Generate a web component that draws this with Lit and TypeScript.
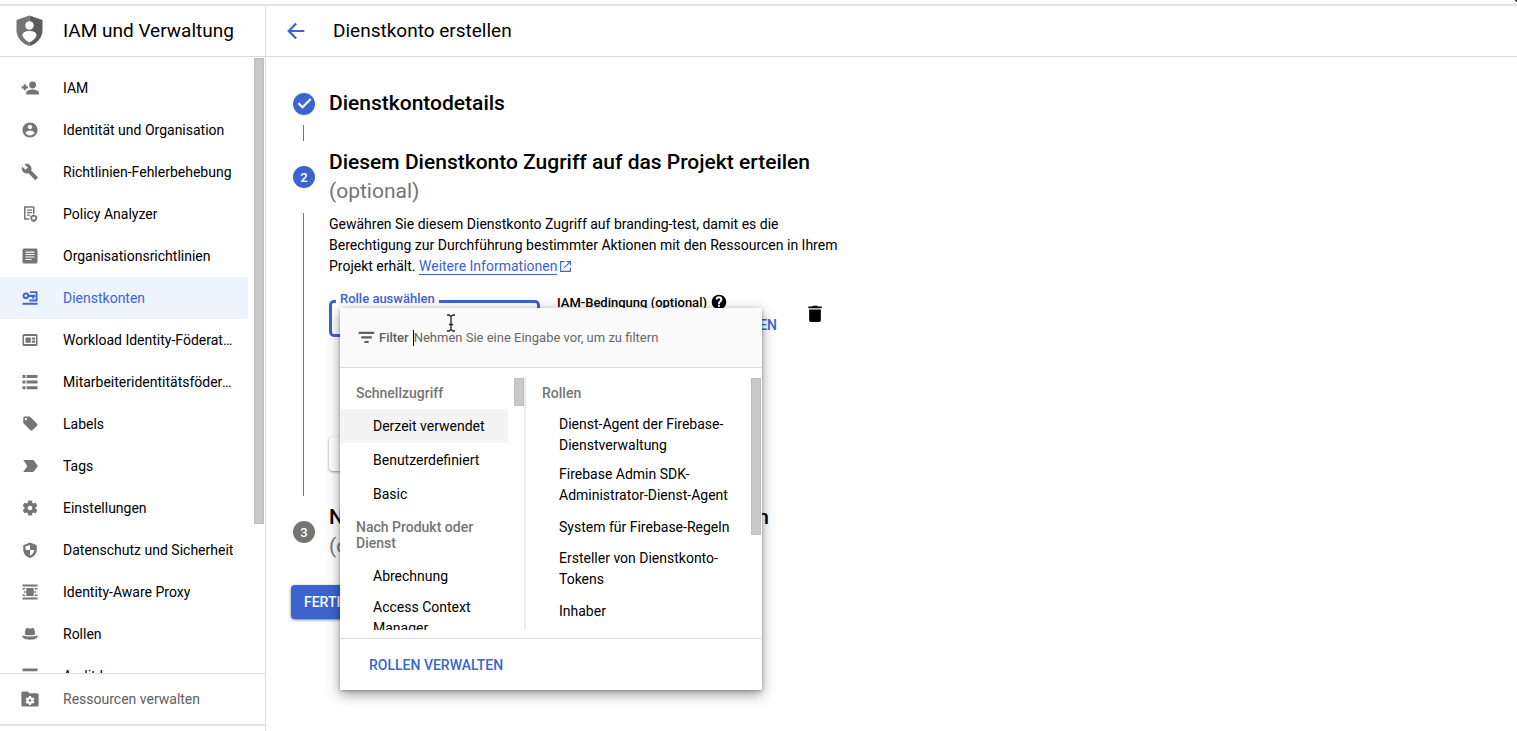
import { LitElement, html, css, svg } from "lit";
import { customElement, property } from "lit/decorators.js";

const ICONS: Record<string, unknown> = {
  addPerson: svg`<circle cx="15.500" cy="8" r="4.600"/><path d="M15.500 14c-2.900 0-8.500 1.300-8.500 4v2.500h17V18c0-2.700-5.600-4-8.500-4zM6.500 10V7h-3v2.500H.8v3h2.700V15h3v-2.500h2.700v-3H6.500z"/>`,
  account: svg`<path d="M12 2C6.480 2 2 6.480 2 12s4.480 10 10 10 10-4.480 10-10S17.520 2 12 2zm0 3c1.660 0 3 1.340 3 3s-1.340 3-3 3-3-1.340-3-3 1.340-3 3-3zm0 14.200c-2.500 0-4.710-1.280-6-3.220.03-1.990 4-3.080 6-3.080 1.990 0 5.970 1.090 6 3.080-1.290 1.940-3.500 3.220-6 3.220z"/>`,
  wrench: svg`<path d="M22.300 18.600l-8.700-8.700c.9-2.300.4-5-1.500-6.900-2-2-5-2.400-7.400-1.300L9 6 6 9 1.600 4.700C.4 7.100.9 10.100 2.900 12.100c1.900 1.900 4.600 2.400 6.900 1.500l8.700 8.700c.4.4 1 .4 1.400 0l2.300-2.300c.5-.4.5-1 .1-1.400z"/>`,
  policy: svg`<path d="M5 1.500h12a1 1 0 0 1 1 1V12h-2V3.500H6v14h5v2H5a1 1 0 0 1-1-1v-16a1 1 0 0 1 1-1z"/><path d="M8 6h7v1.600H8zm0 3.400h7V11H8zm0 3.400h4v1.600H8z"/><path fill-rule="evenodd" d="M17 12.500l4.500 2V17.500c0 2.400-1.800 4.500-4.500 5.200-2.700-.7-4.500-2.800-4.500-5.200v-3zm0 2.700a2.200 2.200 0 1 0 0 4.400 2.200 2.200 0 0 0 0-4.400z"/>`,
  article: svg`<path fill-rule="evenodd" d="M4 2h16a2 2 0 0 1 2 2v16a2 2 0 0 1-2 2H4a2 2 0 0 1-2-2V4a2 2 0 0 1 2-2zm2 4v1.500h12V6zm0 3.300v1.500h12V9.300zm0 3.300v1.500h12v-1.500zm0 3.300v1.500h8v-1.500z"/>`,
  serviceKey: svg`<path fill-rule="evenodd" d="M6.500 4.500a4.500 4.500 0 0 1 4.300 3H19v3.200h-1.500V13H15v-2.300h-4.200a4.500 4.500 0 1 1-4.300-6.200zm0 2.700a1.800 1.800 0 1 0 0 3.600 1.800 1.800 0 0 0 0-3.600z"/><path d="M12 3h10v13.500H11V14h8.500V5.300H12zM2 18.300h20V21H2z"/>`,
  card: svg`<path fill-rule="evenodd" d="M4 4h16a2 2 0 0 1 2 2v12a2 2 0 0 1-2 2H4a2 2 0 0 1-2-2V6a2 2 0 0 1 2-2zm0 2.600v10.800h16V6.600z"/><path d="M6 8.500h7v7H6zm8.500 0h4.500v2.700h-4.500zm0 4.300h4.500v2.700h-4.500z"/>`,
  list: svg`<path d="M2 2.500h4v4H2zm5.500 0H22v4H7.500zM2 10h4v4H2zm5.500 0H22v4H7.500zM2 17.500h4v4H2zm5.500 0H22v4H7.500z"/>`,
  label: svg`<path d="M21.410 11.580l-9-9C12.050 2.220 11.550 2 11 2H5c-1.100 0-2 .9-2 2v6c0 .55.22 1.050.59 1.420l9 9c.36.36.86.58 1.410.58.550 0 1.050-.22 1.410-.59l6-6c.37-.36.59-.86.59-1.410 0-.55-.23-1.060-.59-1.420zM6.500 7C5.670 7 5 6.330 5 5.500S5.670 4 6.500 4 8 4.670 8 5.500 7.330 7 6.500 7z"/>`,
  tag: svg`<path d="M3 4h12.500c.8 0 1.500.4 1.900 1L22.500 12l-5.100 7c-.4.600-1.100 1-1.900 1H3l5.500-8z"/>`,
  gear: svg`<path d="M19.430 12.980c.04-.32.07-.64.07-.98s-.03-.66-.07-.98l2.110-1.650c.19-.15.24-.42.12-.64l-2-3.460c-.12-.22-.39-.3-.61-.22l-2.490 1c-.52-.4-1.080-.73-1.690-.98l-.38-2.650C14.460 2.180 14.250 2 14 2h-4c-.25 0-.46.18-.49.42l-.38 2.650c-.61.25-1.170.59-1.690.98l-2.490-1c-.23-.09-.49 0-.61.22l-2 3.460c-.13.22-.07.49.12.64l2.110 1.650c-.04.32-.07.65-.07.98s.03.66.07.98l-2.110 1.650c-.19.15-.24.42-.12.64l2 3.460c.12.22.39.3.61.22l2.490-1c.52.4 1.080.73 1.690.98l.38 2.650c.03.24.24.42.49.42h4c.25 0 .46-.18.49-.42l.38-2.650c.61-.25 1.170-.59 1.690-.98l2.490 1c.23.09.49 0 .61-.22l2-3.460c.12-.22.07-.49-.12-.64zM12 15a3 3 0 1 1 0-6 3 3 0 0 1 0 6z"/>`,
  shield: svg`<path fill-rule="evenodd" d="M12 2L3 5.500v6c0 5 3.840 9.600 9 11 5.160-1.400 9-6 9-11v-6zm0 3.200V12h5.800c-.6 3.500-2.800 6.300-5.800 7.400V12H6V7.300z"/>`,
  proxy: svg`<path d="M2 2h20v2.800H2zm0 17.200h20V22H2zM7 6.800h10v10.400H7zM2 6.800h3.500v2H2zm16.500 0H22v2h-3.500zM2 15.200h3.500v2H2zm16.500 0H22v2h-3.500zM4 11h2.500v2H4zm13.500 0H20v2h-2.500z"/>`,
  hat: svg`<path d="M7.500 4c1-.5 2.700.8 4.500.8S15.500 3.500 16.500 4c1.400.8 2.200 4.600 2.500 8.500-4 1.500-10 1.500-14 0C5.300 8.600 6.100 4.800 7.500 4zM2 13.500c6 2.600 14 2.600 20 0v2.300c0 2-4 3.900-10 3.900s-10-1.900-10-3.900z"/>`,
  audit: svg`<path d="M2 2h20v3.500H2zm0 6.500h20v3H2zm0 6h20v3H2z"/>`,
  folderGear: svg`<path fill-rule="evenodd" d="M2.500 2H9l2.200 2.300H21.500a2 2 0 0 1 2 2V20a2 2 0 0 1-2 2h-19a2 2 0 0 1-2-2V4a2 2 0 0 1 2-2zm8.200 6l-.4 1.800-1.200.7-1.800-.6-1.300 2.200 1.400 1.200v1.400L6 15.900l1.300 2.200 1.800-.6 1.200.7.400 1.800h2.600l.4-1.800 1.200-.7 1.800.6 1.300-2.200-1.400-1.200v-1.400l1.400-1.200-1.300-2.200-1.800.6-1.200-.7L13.300 8zm1.300 4.200a1.800 1.800 0 1 1 0 3.600 1.800 1.800 0 0 1 0-3.600z"/>`,
  back: svg`<path d="M22 10.700H6.400l6.700-6.700L11.200 2.100 1.400 12l9.800 9.900 1.900-1.900-6.700-6.700H22z"/>`,
  check: svg`<path d="M9.200 19.500L2.300 12.600l2.200-2.200 4.700 4.700L19.700 4.600l2.200 2.200z"/>`,
  external: svg`<path d="M20 20H4V4h6V2H2v20h20v-8h-2zM14 2v2h4.600l-9.800 9.800 1.400 1.400L20 5.400V10h2V2z"/>`,
  help: svg`<path d="M12 1a11 11 0 1 0 0 22 11 11 0 0 0 0-22zm1.500 18h-3v-2.800h3zm2.400-7.900l-1 1c-.9.800-1.400 1.500-1.400 2.900h-3v-.8c0-1.200.5-2.300 1.400-3.200l1.300-1.300c.4-.3.6-.8.6-1.300a1.900 1.900 0 0 0-3.800 0H7a5 5 0 0 1 10 0c0 1-.4 2-1.100 2.700z"/>`,
  trash: svg`<path d="M5 6.500h14V19.500c0 1.100-.9 2-2 2H7c-1.100 0-2-.9-2-2zM4 3h4.500l1-1h5l1 1H20v2H4z"/>`,
  filter: svg`<path d="M1 4h22v3H1zm3.500 6.300h15v3h-15zM9 16.800h6v3H9z"/>`,
};

@customElement("ui-icon")
export class UiIcon extends LitElement {
  @property() name = "";
  @property({ type: Number }) size = 18;
  static styles = css`
    :host { display: inline-flex; flex: none; }
    svg { display: block; fill: currentColor; }
  `;
  render() {
    return html`<svg width=${this.size} height=${this.size} viewBox="0 0 24 24" aria-hidden="true">${ICONS[this.name]}</svg>`;
  }
}

const NAV: [string, string][] = [
  ["addPerson", "IAM"],
  ["account", "Identität und Organisation"],
  ["wrench", "Richtlinien-Fehlerbehebung"],
  ["policy", "Policy Analyzer"],
  ["article", "Organisationsrichtlinien"],
  ["serviceKey", "Dienstkonten"],
  ["card", "Workload Identity-Föderation"],
  ["list", "Mitarbeiteridentitätsföderation"],
  ["label", "Labels"],
  ["tag", "Tags"],
  ["gear", "Einstellungen"],
  ["shield", "Datenschutz und Sicherheit"],
  ["proxy", "Identity-Aware Proxy"],
  ["hat", "Rollen"],
  ["audit", "Audit-Logs"],
];

@customElement("side-nav")
export class SideNav extends LitElement {
  static styles = css`
    :host { display: flex; flex-direction: column; min-height: 0; border-right: 1px solid #dadce0; }
    .brand { display: flex; align-items: center; height: 51px; flex: none; border-bottom: 1px solid #dadce0; padding-left: 16px; gap: 20px; box-sizing: border-box; }
    .brand h1 { margin: 0; font-size: 19px; font-weight: 400; line-height: 24px; }
    .scroll { flex: 1; min-height: 0; display: flex; overflow: hidden; padding-right: 1px; gap: 6px; }
    ul { list-style: none; margin: 0; padding: 10px 0 0; flex: 1; min-width: 0; }
    .item { display: flex; align-items: center; height: 42px; gap: 24px; padding: 0 13px 0 21px; color: #000; text-decoration: none; box-sizing: border-box; }
    .item ui-icon { color: #757575; }
    .item.active { background: #eef4fe; color: #3c64cf; }
    .item.active ui-icon { color: #3c64cf; }
    .text { overflow: hidden; white-space: nowrap; text-overflow: ellipsis; }
    .track { width: 10px; flex: none; padding-top: 1px; }
    .thumb { height: 466px; background: #c9c9c9; box-sizing: border-box; border: 1px solid #bdbdbd; }
    .foot { flex: none; border-top: 1px solid #dadce0; border-bottom: 2px solid #e3e4e8; margin-bottom: 5px; }
    .foot .item { height: 50px; color: #5f6062; }
  `;
  render() {
    return html`
      <div class="brand">
        <svg width="27" height="32" viewBox="0 0 27 32" aria-hidden="true">
          <path fill="#757575" d="M13.500 0.500L0.500 5V15c0 7.500 5.500 14 13 16z" />
          <path fill="#5c5c5c" d="M13.500 0.500l13 4.500V15c0 7.500-5.500 14-13 16z" />
          <circle cx="13.500" cy="10.500" r="4.200" fill="#fff" />
          <path fill="#fff" d="M6.500 20.500c0-3.400 3.500-4.500 7-4.500s7 1.100 7 4.500c-.8 3.200-4 5.500-7 6.800-3-1.300-6.200-3.600-7-6.800z" />
        </svg>
        <h1>IAM und Verwaltung</h1>
      </div>
      <div class="scroll">
        <ul>
          ${NAV.map(([icon, text]) => html`<li><a href="#" class="item ${text === "Dienstkonten" ? "active" : ""}"><ui-icon name=${icon}></ui-icon><span class="text">${text}</span></a></li>`)}
        </ul>
        <div class="track"><div class="thumb"></div></div>
      </div>
      <div class="foot"><a href="#" class="item"><ui-icon name="folderGear"></ui-icon><span class="text">Ressourcen verwalten</span></a></div>
    `;
  }
}

@customElement("role-picker")
export class RolePicker extends LitElement {
  static styles = css`
    :host { display: block; width: 422px; background: #fff; box-shadow: 0 4px 12px rgba(0, 0, 0, 0.4), 0 1px 3px rgba(0, 0, 0, 0.25); }
    .filter { display: flex; align-items: center; height: 60px; box-sizing: border-box; background: #fafafa; border-bottom: 1px solid #dadce0; padding: 0 18px; color: #5f6062; font-size: 13px; }
    .filter label { display: flex; align-items: center; gap: 4px; font-weight: 500; }
    input { flex: 1; min-width: 0; border: 0; border-left: 1px solid #000; background: none; outline: 0; font: inherit; line-height: 16px; height: 16px; padding: 0; margin-left: 4px; }
    input::placeholder { color: #666; opacity: 1; }
    .columns { display: grid; grid-template-columns: 186px 1fr; height: 270px; box-sizing: border-box; padding: 9px 0 8px; font-size: 14px; }
    .col { display: flex; min-height: 0; overflow: hidden; }
    .col.left { border-right: 2px solid #ebebeb; }
    .list { flex: 1; min-width: 0; margin-right: 6px; }
    .col.right .list { margin-right: 8px; }
    h3 { margin: 0; padding: 8px 16px; font-size: 14px; line-height: 16px; font-weight: 500; color: #757575; }
    ul { list-style: none; margin: 0; padding: 0; }
    .right ul { padding-top: 1px; }
    .option { display: flex; align-items: center; width: 100%; min-height: 34px; padding: 4px 8px 4px 33px; box-sizing: border-box; border: 0; background: none; font: inherit; line-height: 21px; text-align: left; color: #000; }
    .option.active { background: #f4f4f4; }
    .track { width: 10px; flex: none; padding-top: 1px; }
    .right .track { margin-right: 1px; }
    .thumb { box-sizing: border-box; background: #c9c9c9; border: 1px solid #bdbdbd; height: 28px; }
    .right .thumb { height: 157px; }
    .foot { display: flex; align-items: center; border-top: 1px solid #dadce0; height: 52px; box-sizing: border-box; padding-left: 29px; }
    .foot button { border: 0; background: none; padding: 0; font: inherit; font-size: 14px; font-weight: 500; color: #3c64cf; }
  `;
  private option(text: string, active = false) {
    return html`<li><button class="option ${active ? "active" : ""}">${text}</button></li>`;
  }
  render() {
    return html`
      <div class="filter">
        <label for="q"><ui-icon name="filter" size="17"></ui-icon>Filter</label>
        <input id="q" placeholder="Nehmen Sie eine Eingabe vor, um zu filtern" />
      </div>
      <div class="columns">
        <div class="col left">
          <div class="list">
            <h3>Schnellzugriff</h3>
            <ul>${this.option("Derzeit verwendet", true)}${this.option("Benutzerdefiniert")}${this.option("Basic")}</ul>
            <h3>Nach Produkt oder Dienst</h3>
            <ul>${this.option("Abrechnung")}${this.option("Access Context Manager")}</ul>
          </div>
          <div class="track"><div class="thumb"></div></div>
        </div>
        <div class="col right">
          <div class="list">
            <h3>Rollen</h3>
            <ul>
              ${["Dienst-Agent der Firebase-Dienstverwaltung", "Firebase Admin SDK-Administrator-Dienst-Agent", "System für Firebase-Regeln", "Ersteller von Dienstkonto-Tokens", "Inhaber"].map((t) => this.option(t))}
            </ul>
          </div>
          <div class="track"><div class="thumb"></div></div>
        </div>
      </div>
      <div class="foot"><button>ROLLEN VERWALTEN</button></div>
    `;
  }
}

@customElement("app-root")
export class AppRoot extends LitElement {
  static styles = css`
    :host { display: grid; grid-template-columns: 266px 1fr; height: 100vh; box-sizing: border-box; padding-top: 4px; overflow: hidden; position: relative; background: #fefefe; color: #000; font-family: Roboto, "Noto Sans", sans-serif; font-size: 14px; }
    side-nav, main { border-top: 2px solid #e3e4e8; }
    main { min-width: 0; }
    .corner { position: absolute; top: 0; right: 0; }
    .bar { display: flex; align-items: center; height: 51px; box-sizing: border-box; border-bottom: 1px solid #dadce0; padding-left: 20px; gap: 27px; }
    .bar button { display: flex; border: 0; padding: 0; background: none; color: #3c64cf; }
    .bar h2 { margin: 0; font-size: 19px; font-weight: 400; line-height: 24px; }
    .content { padding: 32px 25px; }
    .step { display: grid; grid-template-columns: 22px minmax(0, 510px); column-gap: 14px; padding-left: 2px; }
    .badge { align-self: center; width: 22px; height: 22px; border-radius: 50%; background: #3c64cf; color: #fff; display: flex; align-items: center; justify-content: center; font-weight: 500; font-size: 13px; }
    .badge.todo { background: #757575; }
    .step h2 { margin: 0; font-size: 21px; line-height: 29px; font-weight: 500; }
    .optional { display: block; color: #757575; font-weight: 400; }
    .line { width: 1px; background: #757575; margin: 7px 0 7px 10px; }
    .short { min-height: 16px; }
    p { margin: 8px 0 15px; line-height: 21px; }
    p a { color: #3c64cf; text-decoration: none; border-bottom: 1px solid #3c64cf; }
    p ui-icon { color: #3c64cf; vertical-align: -2px; margin-left: 2px; }
    .form { display: flex; width: max-content; }
    .field { position: relative; width: 211px; height: 37px; margin-top: 8px; box-sizing: border-box; }
    .select { width: 211px; height: 37px; box-sizing: border-box; border: 3px solid #3c64cf; border-radius: 5px; background: #fff; appearance: none; display: block; }
    .floating { position: absolute; top: -9px; left: 7px; padding: 0 4px; line-height: 16px; font-size: 13px; font-weight: 500; color: #3c64cf; background: #fefefe; }
    role-picker { position: absolute; top: 8px; left: 11px; z-index: 2; }
    .pointer { position: absolute; top: 14px; left: 117px; z-index: 3; }
    .condition { width: 220px; margin-left: 17px; }
    .caption { display: flex; align-items: center; gap: 4px; height: 20px; font-size: 13px; font-weight: 500; }
    .link { display: block; border: 0; padding: 0; background: none; font: inherit; font-weight: 500; line-height: 26px; margin-left: auto; color: #3c64cf; }
    .trash { border: 0; padding: 0; margin: 12px 0 0 28px; height: 20px; background: none; color: #000; }
    .more { display: block; margin: 99px 0 32px; height: 34px; border: 0; border-radius: 4px; background: #fff; padding: 0 13px; font: inherit; font-weight: 500; color: #3c64cf; box-shadow: 0 1px 3px rgba(0, 0, 0, 0.4); }
    .done { margin-top: 24px; height: 34px; border: 0; border-radius: 4px; background: #3c64cf; color: #fff; padding: 0 13px; font: inherit; font-weight: 500; box-shadow: 0 1px 3px rgba(0, 0, 0, 0.5); }
  `;
  render() {
    return html`
      <side-nav></side-nav>
      <main>
        <div class="bar">
          <button aria-label="Zurück"><ui-icon name="back" size="20"></ui-icon></button>
          <h2>Dienstkonto erstellen</h2>
        </div>
        <div class="content">
          <section class="step">
            <span class="badge"><ui-icon name="check" size="17"></ui-icon></span>
            <h2>Dienstkontodetails</h2>
            <div class="line short"></div>
          </section>
          <section class="step">
            <span class="badge">2</span>
            <h2>Diesem Dienstkonto Zugriff auf das Projekt erteilen <span class="optional">(optional)</span></h2>
            <div class="line"></div>
            <div>
              <p>Gewähren Sie diesem Dienstkonto Zugriff auf branding-test, damit es die Berechtigung zur Durchführung bestimmter Aktionen mit den Ressourcen in Ihrem Projekt erhält. <a href="#">Weitere Informationen</a><ui-icon name="external" size="13"></ui-icon></p>
              <div class="form">
                <div class="field">
                  <label class="floating" for="role">Rolle auswählen</label>
                  <select class="select" id="role"></select>
                  <role-picker></role-picker>
                  <svg class="pointer" width="10" height="18" viewBox="0 0 10 18" aria-hidden="true"><path d="M1 1h2l2 1.500L7 1h2M5 2.500v13M1 17h2l2-1.500L7 17h2M3 10.500h4" fill="none" stroke="#222" stroke-width="1.300" /></svg>
                </div>
                <div class="condition">
                  <div class="caption">IAM-Bedingung (optional)<ui-icon name="help" size="16"></ui-icon></div>
                  <button class="link">BEDINGUNG HINZUFÜGEN</button>
                </div>
                <button class="trash" aria-label="Löschen"><ui-icon name="trash" size="20"></ui-icon></button>
              </div>
              <button class="more">WEITERE ROLLE HINZUFÜGEN</button>
            </div>
          </section>
          <section class="step">
            <span class="badge todo">3</span>
            <h2>Nutzern Zugriff auf dieses Dienstkonto erteilen <span class="optional">(optional)</span></h2>
          </section>
          <button class="done">FERTIG</button>
        </div>
      </main>
      <svg class="corner" width="2" height="2" viewBox="0 0 2 2" aria-hidden="true"><path d="M0 0h2v2H1V1H0z" fill="#333" /></svg>
    `;
  }
}
